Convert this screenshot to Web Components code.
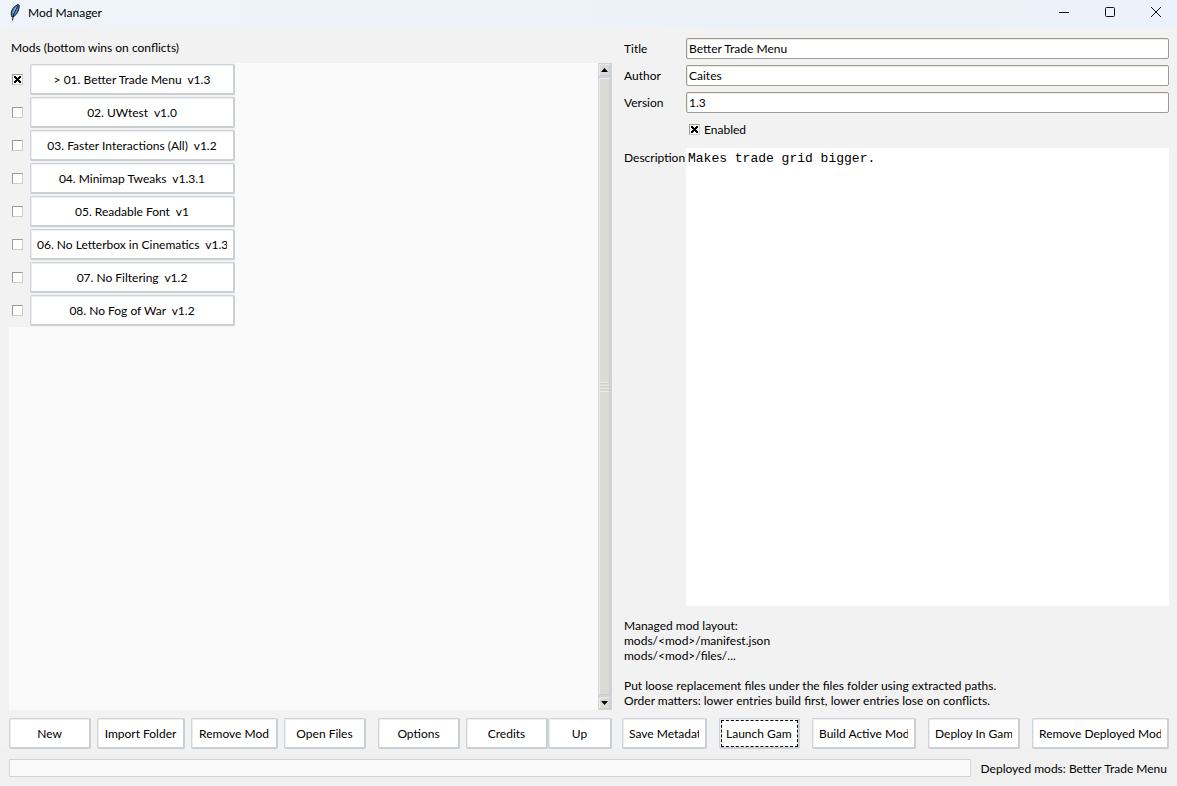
<!DOCTYPE html>
<html lang="en">
<head>
<meta charset="utf-8">
<title>Mod Manager</title>
<style>
  html, body { height: 100%; }
  body {
    margin: 0;
    background: #f2f2f2;
    color: #000;
    font: 12px/15px "Segoe UI", Lato, "Open Sans", sans-serif;
  }
</style>
</head>
<body>
<mod-manager></mod-manager>

<script>
const define = (name, html, setup) => {
  const template = document.createElement('template');
  template.innerHTML = html;

  customElements.define(name, class extends HTMLElement {
    constructor() {
      super();
      this.attachShadow({ mode: 'open' });
      this.shadowRoot.appendChild(template.content.cloneNode(true));
    }

    connectedCallback() {
      if (setup) setup(this, this.shadowRoot);
    }
  });
};

define('title-bar', `
  <style>
    :host {
      display: flex;
      align-items: center;
      height: 28px;
      padding-left: 8px;
      background: linear-gradient(90deg, #eff4fb, #ebf2f7 80%, #ecf2fb);
    }
    .logo { width: 14px; height: 18px; margin-bottom: 4px; }
    h1 { flex: 1; margin: 0 0 3px 6px; font-size: 12px; font-weight: 400; }
    nav { display: flex; gap: 4px; }
    button {
      width: 42px;
      height: 28px;
      padding: 0 0 4px;
      border: 0;
      background: none;
      display: flex;
      align-items: center;
      justify-content: center;
    }
    button svg { width: 12px; height: 12px; fill: none; stroke: #111; }
  </style>
  <svg class="logo" viewBox="0 0 14 18" aria-hidden="true">
    <path d="M4 14C2 10 4 4 10 1.500C11.500 1.500 11.500 4 10.500 7C9.500 10 7.500 13 4.500 14Z" fill="#4d86c6" stroke="#10151d"/>
    <path d="M4.500 17.500C5 12 7 7 10 3" fill="none" stroke="#10151d"/>
    <path d="M5 10L8 4.500" fill="none" stroke="#8fc0f0"/>
  </svg>
  <h1><slot></slot></h1>
  <nav>
    <button aria-label="Minimize"><svg viewBox="0 0 12 12"><path d="M1 6.500H11"/></svg></button>
    <button aria-label="Maximize"><svg viewBox="0 0 12 12"><rect x="1.500" y="1.500" width="9" height="9" rx="1"/></svg></button>
    <button aria-label="Close"><svg viewBox="0 0 12 12"><path d="M1 1L11 11M11 1L1 11"/></svg></button>
  </nav>
`);

define('push-button', `
  <style>
    :host { display: block; min-width: 0; }
    button {
      display: block;
      box-sizing: border-box;
      width: 100%;
      height: 31px;
      padding: 0 6px;
      border: 1px solid #cdd4de;
      border-right: 2px solid #cbd0d4;
      border-bottom: 2px solid #cbd0d4;
      border-radius: 2px;
      background: #fff;
      color: inherit;
      font: inherit;
      box-shadow: inset 1px 1px #eeeeec;
    }
    span { display: block; overflow: hidden; white-space: pre; }
    :host([clip]) span { text-align: left; }
    :host([focused]) button { outline: 1px dashed #000; outline-offset: -3px; }
  </style>
  <button><span><slot></slot></span></button>
`);

define('check-box', `
  <style>
    :host { display: block; }
    label { display: flex; align-items: center; gap: 4px; }
    input {
      appearance: none;
      box-sizing: border-box;
      width: 11px;
      height: 11px;
      margin: 0;
      border: 1px solid #9e9a91;
      border-right-color: #cfcdc8;
      border-bottom-color: #cfcdc8;
      background: #fff;
      display: grid;
      place-items: center;
    }
    input:checked::before {
      content: "";
      width: 7px;
      height: 7px;
      background:
        linear-gradient(45deg, transparent 37%, #000 37% 63%, transparent 63%),
        linear-gradient(-45deg, transparent 37%, #000 37% 63%, transparent 63%);
    }
  </style>
  <label><input type="checkbox"><slot></slot></label>
`, (host, root) => {
  root.querySelector('input').checked = host.hasAttribute('checked');
});

define('mod-row', `
  <style>
    :host { display: flex; align-items: center; gap: 7px; padding: 1px 0 1px 3px; }
    push-button { flex: 1; }
  </style>
  <check-box></check-box>
  <push-button><slot></slot></push-button>
`, (host, root) => {
  const input = root.querySelector('check-box').shadowRoot.querySelector('input');
  input.checked = host.hasAttribute('checked');
  input.setAttribute('aria-label', host.textContent.trim());
});

define('scroll-bar', `
  <style>
    :host {
      display: flex;
      flex-direction: column;
      box-sizing: border-box;
      width: 14px;
      border: 1px solid #cdd4de;
      border-right-width: 2px;
      background: #cdd4de;
      gap: 2px;
    }
    button {
      height: 12px;
      padding: 0;
      border: 1px solid #eeebe7;
      border-right-color: #cfcdc8;
      border-bottom-color: #cfcdc8;
      background: #dcdad5;
      display: grid;
      place-items: center;
    }
    svg { width: 7px; height: 4px; }
    .thumb {
      flex: 1;
      display: grid;
      place-items: center;
      background: #dcdad5;
      border: 1px solid #eeebe7;
      border-right-color: #cfcdc8;
      border-bottom-color: #cfcdc8;
    }
    .grip {
      width: 100%;
      height: 10px;
      background: repeating-linear-gradient(#eeebe7 0 1px, #c9ced6 1px 2px, #dcdad5 2px 3px);
    }
  </style>
  <button aria-label="Scroll up"><svg viewBox="0 0 7 4"><path d="M0 4L3.500 0L7 4Z"/></svg></button>
  <div class="thumb"><div class="grip"></div></div>
  <button aria-label="Scroll down"><svg viewBox="0 0 7 4"><path d="M0 0L3.500 4L7 0Z"/></svg></button>
`);

define('mod-list', `
  <style>
    :host { display: flex; flex-direction: column; min-height: 0; }
    h2 { margin: 0 2px 8px; font-size: 12px; font-weight: 400; }
    .frame { flex: 1; display: flex; min-height: 0; }
    .canvas { flex: 1; background: #fafafa; }
    .rows { width: 226px; background: #f2f2f2; }
  </style>
  <h2>Mods (bottom wins on conflicts)</h2>
  <div class="frame">
    <div class="canvas"><div class="rows"><slot></slot></div></div>
    <scroll-bar></scroll-bar>
  </div>
`);

define('text-field', `
  <style>
    :host { display: block; }
    label { display: grid; grid-template-columns: 62px 1fr; align-items: center; }
    input {
      box-sizing: border-box;
      width: 100%;
      height: 21px;
      padding: 0 2px;
      border: 1px solid #9e9a91;
      border-radius: 2px;
      background: #fff;
      box-shadow: inset 1px 1px #eeebe7;
      color: inherit;
      font: inherit;
      outline: 0;
    }
  </style>
  <label><slot></slot><input type="text"></label>
`, (host, root) => {
  root.querySelector('input').value = host.getAttribute('value');
});

define('text-area', `
  <style>
    :host { display: block; }
    label { display: grid; grid-template-columns: 62px 1fr; height: 100%; }
    span { padding-top: 2px; }
    textarea {
      box-sizing: border-box;
      width: 100%;
      height: 100%;
      padding: 3px 2px;
      border: 0;
      background: #fff;
      color: inherit;
      font: 13px/15px "Courier New", "Liberation Mono", monospace;
      resize: none;
      outline: 0;
    }
  </style>
  <label><span><slot></slot></span><textarea></textarea></label>
`, (host, root) => {
  root.querySelector('textarea').value = host.getAttribute('value');
});

define('mod-details', `
  <style>
    :host { display: flex; flex-direction: column; gap: 6px; min-height: 0; }
    check-box { margin-left: 65px; padding: 3px 0; }
    text-area { flex: 1; min-height: 0; margin-top: 2px; }
    p { margin: 6px 0 2px; white-space: pre-line; }
  </style>
  <text-field value="Better Trade Menu">Title</text-field>
  <text-field value="Caites">Author</text-field>
  <text-field value="1.3">Version</text-field>
  <check-box checked>Enabled</check-box>
  <text-area value="Makes trade grid bigger.">Description</text-area>
  <p>Managed mod layout:
    mods/&lt;mod&gt;/manifest.json
    mods/&lt;mod&gt;/files/...

    Put loose replacement files under the files folder using extracted paths.
    Order matters: lower entries build first, lower entries lose on conflicts.</p>
`);

define('status-bar', `
  <style>
    :host { display: flex; align-items: center; gap: 10px; padding: 10px 10px 9px 9px; background: #f0f0f0; }
    progress {
      appearance: none;
      box-sizing: border-box;
      flex: 1;
      height: 18px;
      border: 1px solid #cdd4de;
      background: #fafafa;
    }
    progress::-webkit-progress-bar { background: #fafafa; }
  </style>
  <progress value="0" max="100" aria-label="Progress"></progress>
  <span><slot></slot></span>
`);

define('mod-manager', `
  <style>
    :host { display: flex; flex-direction: column; height: 100vh; }
    main {
      flex: 1;
      display: grid;
      grid-template-columns: 603fr 545fr;
      column-gap: 12px;
      min-height: 0;
      padding: 10px 8px 8px 9px;
    }
    mod-list { padding-top: 2px; }
    .toolbar {
      display: grid;
      grid-template-columns: 603fr 547fr;
      column-gap: 10px;
      padding: 0 8px 0 9px;
    }
    .left, .right { display: grid; }
    .left { grid-template-columns: 82fr 6fr 88fr 6fr 87fr 6fr 82fr 12fr 82fr 6fr 82fr 64fr; }
    .left :nth-child(1) { grid-column: 1; }
    .left :nth-child(2) { grid-column: 3; }
    .left :nth-child(3) { grid-column: 5; }
    .left :nth-child(4) { grid-column: 7; }
    .left :nth-child(5) { grid-column: 9; }
    .left :nth-child(6) { grid-column: 11; }
    .left :nth-child(7) { grid-column: 12; }
    .right { grid-template-columns: 85fr 81fr 104fr 92fr 137fr; column-gap: 12px; }
  </style>
  <title-bar>Mod Manager</title-bar>
  <main>
    <mod-list>
      <mod-row checked>&gt; 01. Better Trade Menu&nbsp; v1.3</mod-row>
      <mod-row>02. UWtest&nbsp; v1.0</mod-row>
      <mod-row>03. Faster Interactions (All)&nbsp; v1.2</mod-row>
      <mod-row>04. Minimap Tweaks&nbsp; v1.3.1</mod-row>
      <mod-row>05. Readable Font&nbsp; v1</mod-row>
      <mod-row>06. No Letterbox in Cinematics&nbsp; v1.3</mod-row>
      <mod-row>07. No Filtering&nbsp; v1.2</mod-row>
      <mod-row>08. No Fog of War&nbsp; v1.2</mod-row>
    </mod-list>
    <mod-details></mod-details>
  </main>
  <div class="toolbar">
    <div class="left">
      <push-button>New</push-button>
      <push-button>Import Folder</push-button>
      <push-button>Remove Mod</push-button>
      <push-button>Open Files</push-button>
      <push-button>Options</push-button>
      <push-button>Credits</push-button>
      <push-button>Up</push-button>
    </div>
    <div class="right">
      <push-button clip>Save Metadata</push-button>
      <push-button clip focused>Launch Game</push-button>
      <push-button clip>Build Active Mods</push-button>
      <push-button clip>Deploy In Game</push-button>
      <push-button clip>Remove Deployed Mods</push-button>
    </div>
  </div>
  <status-bar>Deployed mods: Better Trade Menu</status-bar>
`);
</script>
</body>
</html>
